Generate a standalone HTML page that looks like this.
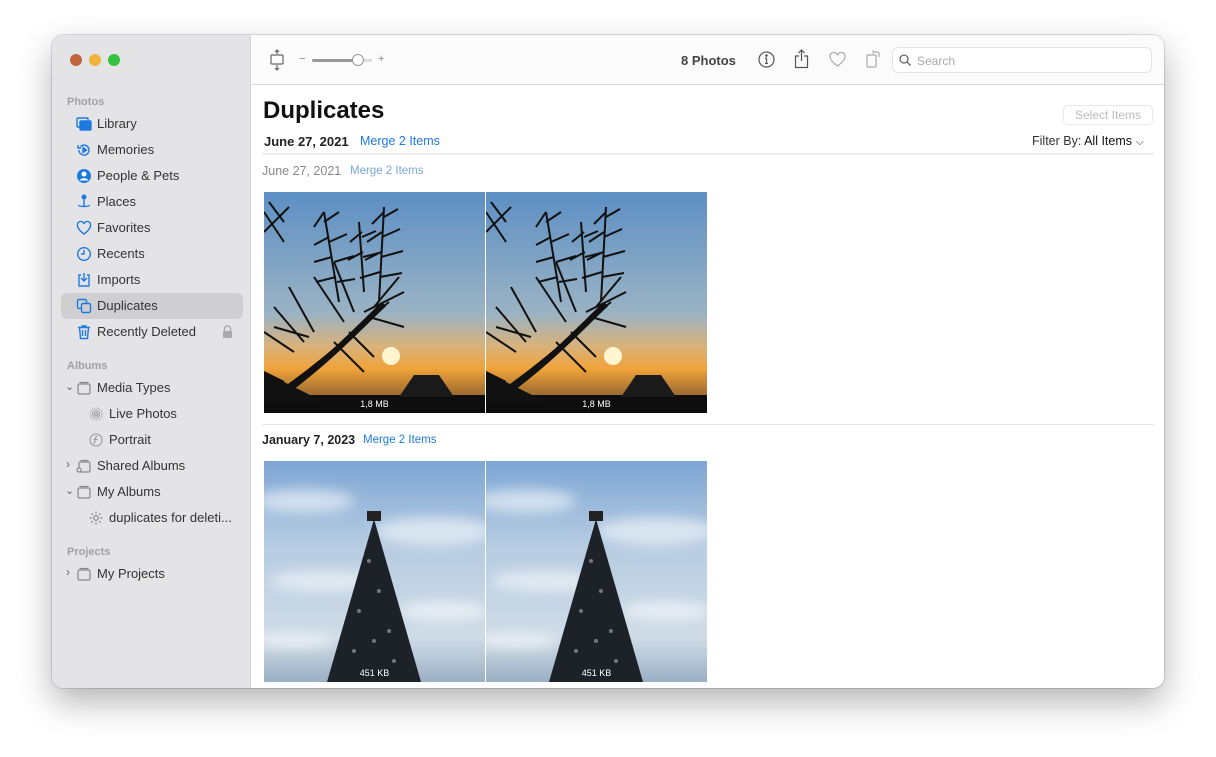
<!DOCTYPE html>
<html><head><meta charset="utf-8"><style>
*{margin:0;padding:0;box-sizing:border-box}
body{width:1216px;height:757px;background:#fff;font-family:"Liberation Sans",sans-serif;position:relative;overflow:hidden}
.win{position:absolute;left:52px;top:35px;width:1112px;height:653px;border-radius:11px;overflow:hidden;background:#fff;box-shadow:0 14px 34px rgba(0,0,0,.3),0 0 0 1px rgba(0,0,0,.12)}
.side{position:absolute;left:0;top:0;width:199px;height:100%;background:#e4e4e6;border-right:1px solid #d2d2d4}
.dot{position:absolute;top:19px;width:12px;height:12px;border-radius:50%}
.sec{position:absolute;left:15px;font-size:11px;font-weight:bold;color:#a2a2a6}
.it{position:absolute;left:45px;font-size:13px;color:#333;line-height:16px}
.ic{position:absolute;left:24px;width:16px;height:16px}
.sel{position:absolute;left:9px;top:258px;width:182px;height:26px;background:#cfcfd2;border-radius:6px}
.main{position:absolute;left:200px;top:0;right:0;bottom:0}
.tb{position:absolute;left:0;right:0;top:0;height:50px;border-bottom:1px solid #dcdcdc;background:#fbfbfb}
.blue{color:#1f7ae0}
.ph{position:absolute;width:221px;height:221px}
.cap{position:absolute;bottom:4px;width:100%;text-align:center;color:#fff;font-size:9px}
</style></head><body>
<div class="win">
<div class="side">
<div class="dot" style="left:18px;background:#c1653f"></div>
<div class="dot" style="left:37px;background:#f2b33a"></div>
<div class="dot" style="left:56px;background:#37c140"></div>
<div class="sec" style="top:61px">Photos</div>
<div class="sel"></div>
<svg class="ic" style="top:81px" viewBox="0 0 16 16" fill="none" stroke="#1f7ae0" stroke-width="1.4"><rect x="1" y="2" width="11" height="9" rx="1"/><rect x="4" y="5" width="11" height="9" rx="1" fill="#1f7ae0"/></svg><div class="it" style="top:81px">Library</div>
<svg class="ic" style="top:107px" viewBox="0 0 16 16" fill="none" stroke="#1f7ae0" stroke-width="1.4"><path d="M3 8a5 5 0 1 0 1.5-3.5M2 3v3h3"/><path d="M7 5.5v5l3.5-2.5z" fill="#1f7ae0"/></svg><div class="it" style="top:107px">Memories</div>
<svg class="ic" style="top:133px" viewBox="0 0 16 16"><circle cx="8" cy="8" r="7" fill="#1f7ae0"/><circle cx="8" cy="6" r="2.5" fill="#fff"/><path d="M3.5 12.5c1.5-3 7.5-3 9 0" fill="#fff"/></svg><div class="it" style="top:133px">People &amp; Pets</div>
<svg class="ic" style="top:159px" viewBox="0 0 16 16" fill="none" stroke="#1f7ae0" stroke-width="1.4"><circle cx="8" cy="3" r="1.8" fill="#1f7ae0"/><path d="M8 5v7M3 11c-2 2 12 2 10 0"/></svg><div class="it" style="top:159px">Places</div>
<svg class="ic" style="top:185px" viewBox="0 0 16 16" fill="none" stroke="#1f7ae0" stroke-width="1.4"><path d="M8 14S1.5 9.5 1.5 5.5A3.2 3.2 0 0 1 8 4a3.2 3.2 0 0 1 6.5 1.5C14.5 9.5 8 14 8 14z"/></svg><div class="it" style="top:185px">Favorites</div>
<svg class="ic" style="top:211px" viewBox="0 0 16 16" fill="none" stroke="#1f7ae0" stroke-width="1.4"><circle cx="8" cy="8" r="6.3"/><path d="M8 4v4H5"/></svg><div class="it" style="top:211px">Recents</div>
<svg class="ic" style="top:237px" viewBox="0 0 16 16" fill="none" stroke="#1f7ae0" stroke-width="1.4"><path d="M5 3H3v11h10V3h-2M8 1v8M5 6l3 3 3-3"/></svg><div class="it" style="top:237px">Imports</div>
<svg class="ic" style="top:263px" viewBox="0 0 16 16" fill="none" stroke="#1f7ae0" stroke-width="1.4"><rect x="1.5" y="1.5" width="9" height="9" rx="1.5"/><rect x="5.5" y="5.5" width="9" height="9" rx="1.5" fill="#cfcfd2"/></svg><div class="it" style="top:263px">Duplicates</div>
<svg class="ic" style="top:289px" viewBox="0 0 16 16" fill="none" stroke="#1f7ae0" stroke-width="1.4"><path d="M2 3.5h12M6 3.5V2h4v1.5M3.5 3.5l1 11h7l1-11M6.5 6v6M9.5 6v6"/></svg><div class="it" style="top:289px">Recently Deleted</div>
<svg style="position:absolute;left:170px;top:290px" width="11" height="13" viewBox="0 0 11 13"><path d="M2.5 6V4a3 3 0 0 1 6 0v2" fill="none" stroke="#aaa" stroke-width="1.4"/><rect x="1" y="6" width="9" height="7" rx="1" fill="#aaa"/></svg>
<div class="sec" style="top:325px">Albums</div>
<div style="position:absolute;left:13px;top:345px;font-size:11px;color:#666">⌄</div>
<svg class="ic" style="top:345px" viewBox="0 0 16 16" fill="none" stroke="#888" stroke-width="1.2"><rect x="2" y="4" width="12" height="10" rx="1.5"/><path d="M3.5 2.5h9"/></svg><div class="it" style="top:345px">Media Types</div>
<svg class="ic" style="left:36px;top:371px" viewBox="0 0 16 16" fill="none" stroke="#999" stroke-width="1.1"><circle cx="8" cy="8" r="6" stroke-dasharray="1 1"/><circle cx="8" cy="8" r="3.5"/><circle cx="8" cy="8" r="1.5"/></svg><div class="it" style="left:57px;top:371px">Live Photos</div>
<svg class="ic" style="left:36px;top:397px" viewBox="0 0 16 16" fill="none" stroke="#999" stroke-width="1.1"><circle cx="8" cy="8" r="6"/><path d="M9.5 4.5C7.5 4 7 6 7 8s-.5 3.5-2 3.5M5.5 7.5h4"/></svg><div class="it" style="left:57px;top:397px">Portrait</div>
<div style="position:absolute;left:14px;top:422px;font-size:12px;color:#666">›</div>
<svg class="ic" style="top:423px" viewBox="0 0 16 16" fill="none" stroke="#888" stroke-width="1.2"><rect x="3" y="4" width="11" height="10" rx="1.5"/><path d="M4.5 2.5h8"/><circle cx="3" cy="12" r="2" fill="#e4e4e6"/></svg><div class="it" style="top:423px">Shared Albums</div>
<div style="position:absolute;left:13px;top:449px;font-size:11px;color:#666">⌄</div>
<svg class="ic" style="top:449px" viewBox="0 0 16 16" fill="none" stroke="#888" stroke-width="1.2"><rect x="2" y="4" width="12" height="10" rx="1.5"/><path d="M3.5 2.5h9"/></svg><div class="it" style="top:449px">My Albums</div>
<svg class="ic" style="left:36px;top:475px" viewBox="0 0 16 16" fill="none" stroke="#888" stroke-width="1.2"><circle cx="8" cy="8" r="2.3"/><path d="M8 1.5v2M8 12.5v2M1.5 8h2M12.5 8h2M3.4 3.4l1.4 1.4M11.2 11.2l1.4 1.4M3.4 12.6l1.4-1.4M11.2 4.8l1.4-1.4"/></svg><div class="it" style="left:57px;top:475px">duplicates for deleti...</div>
<div class="sec" style="top:511px">Projects</div>
<div style="position:absolute;left:14px;top:530px;font-size:12px;color:#666">›</div>
<svg class="ic" style="top:531px" viewBox="0 0 16 16" fill="none" stroke="#888" stroke-width="1.2"><rect x="2" y="4" width="12" height="10" rx="1.5"/><path d="M3.5 2.5h9"/></svg><div class="it" style="top:531px">My Projects</div>
</div>
<div class="main">
<div class="tb">
<svg style="position:absolute;left:16px;top:14px" width="18" height="22" viewBox="0 0 18 22" fill="none" stroke="#666" stroke-width="1.2"><rect x="3" y="6" width="12" height="9" rx="1"/><path d="M9 1v4M9 16v5M7 3l2-2 2 2M7 19l2 2 2-2"/></svg>
<div style="position:absolute;left:47px;top:18px;font-size:11px;color:#888">−</div>
<div style="position:absolute;left:60px;top:24px;width:48px;height:3px;background:#999;border-radius:2px"></div>
<div style="position:absolute;left:108px;top:24px;width:12px;height:3px;background:#ddd"></div>
<div style="position:absolute;left:100px;top:19px;width:12px;height:12px;border-radius:50%;background:#fff;border:1px solid #999"></div>
<div style="position:absolute;left:126px;top:18px;font-size:11px;color:#888">+</div>
<div style="position:absolute;left:429px;top:18px;font-size:13px;font-weight:bold;color:#444">8 Photos</div>
<svg style="position:absolute;left:506px;top:16px" width="17" height="17" viewBox="0 0 17 17" fill="none" stroke="#555" stroke-width="1.2"><circle cx="8.5" cy="8.5" r="7.5"/><path d="M8.5 7v5.5M7 12.5h3M7 7h1.5"/><circle cx="8.5" cy="4.5" r=".7" fill="#555"/></svg>
<svg style="position:absolute;left:542px;top:14px" width="15" height="20" viewBox="0 0 15 20" fill="none" stroke="#555" stroke-width="1.2"><path d="M5 7H1.5v11.5h12V7H10M7.5 1v11M4.5 4l3-3 3 3"/></svg>
<svg style="position:absolute;left:577px;top:17px" width="17" height="15" viewBox="0 0 17 15" fill="none" stroke="#aaa" stroke-width="1.2"><path d="M8.5 14S1 9 1 4.8A3.6 3.6 0 0 1 8.5 3.5 3.6 3.6 0 0 1 16 4.8C16 9 8.5 14 8.5 14z"/></svg>
<svg style="position:absolute;left:613px;top:14px" width="16" height="20" viewBox="0 0 16 20" fill="none" stroke="#aaa" stroke-width="1.2"><rect x="2" y="6" width="9" height="12" rx="1"/><path d="M9 3h3a2 2 0 0 1 2 2v3M7.5 1.5 9 3 7.5 4.5"/></svg>
<div style="position:absolute;left:640px;top:12px;width:260px;height:26px;border:1px solid #e2e2e2;border-radius:6px;background:#fff"></div>
<svg style="position:absolute;left:647px;top:19px" width="12" height="12" viewBox="0 0 12 12" fill="none" stroke="#666" stroke-width="1.3"><circle cx="5" cy="5" r="4"/><path d="M8 8l3.5 3.5"/></svg>
<div style="position:absolute;left:665px;top:19px;font-size:12px;color:#aaa">Search</div>
</div>
<div style="position:absolute;left:11px;top:62px;font-size:24px;font-weight:bold;color:#111">Duplicates</div>
<div style="position:absolute;left:811px;top:70px;width:90px;height:20px;border:1px solid #e8e8e8;border-radius:5px;font-size:12px;color:#bbb;text-align:center;line-height:18px">Select Items</div>
<div style="position:absolute;left:12px;top:99px;font-size:13px;font-weight:bold;color:#222">June 27, 2021</div>
<div class="blue" style="position:absolute;left:108px;top:99px;font-size:12.5px">Merge 2 Items</div>
<div style="position:absolute;left:780px;top:99px;font-size:12.5px;color:#333">Filter By: <b style="font-weight:normal;color:#111">All Items</b> <span style="font-size:11px">⌵</span></div>
<div style="position:absolute;left:10px;right:10px;top:118px;height:2px;background:#ececec"></div>
<div style="position:absolute;left:10px;top:129px;font-size:12.5px;color:#888">June 27, 2021</div>
<div style="position:absolute;left:98px;top:130px;font-size:11.5px;color:#7aa6dc">Merge 2 Items</div>
<div style="position:absolute;left:10px;right:10px;top:389px;height:1px;background:#e5e5e5"></div>
<div style="position:absolute;left:10px;top:398px;font-size:12.5px;font-weight:bold;color:#222">January 7, 2023</div>
<div class="blue" style="position:absolute;left:111px;top:399px;font-size:11.5px">Merge 2 Items</div>

<svg width="0" height="0" style="position:absolute">
<defs>
<filter id="bl"><feGaussianBlur stdDeviation="6"/></filter>
<linearGradient id="sky1" x1="0" y1="0" x2="0" y2="1"><stop offset="0" stop-color="#5d8fc4"/><stop offset=".55" stop-color="#9ab3c4"/><stop offset=".7" stop-color="#d9b27a"/><stop offset=".8" stop-color="#f0a33a"/><stop offset=".92" stop-color="#9a6a30"/></linearGradient>
<linearGradient id="sky2" x1="0" y1="0" x2="0" y2="1"><stop offset="0" stop-color="#7ea6d4"/><stop offset=".4" stop-color="#b8cde2"/><stop offset=".8" stop-color="#cfdbe6"/><stop offset="1" stop-color="#9bb0c4"/></linearGradient>
<symbol id="p1" viewBox="0 0 221 221">
<rect width="221" height="221" fill="url(#sky1)"/>
<circle cx="127" cy="164" r="9" fill="#fff6d0"/>
<g stroke="#111" stroke-width="2" fill="none">
<path d="M0 210 C60 170 100 130 125 110 M60 20 L75 110 M120 15 L115 110 M95 30 L100 100"/>
<path d="M60 20 l-10 15 M60 30 l15 -10 M65 45 l-15 8 M65 50 l18 -8 M68 65 l-18 5 M70 70 l20 -6 M72 85 l-20 5 M73 90 l18 -3 M120 20 l-12 12 M120 25 l14 -8 M118 40 l-15 10 M118 45 l18 -8 M117 60 l-16 8 M117 65 l22 -6 M116 80 l-20 6 M116 85 l22 -4 M98 40 l-12 10 M98 45 l14 -6 M99 60 l-15 8 M99 65 l16 -4 M40 150 l-30 -35 M45 145 l-35 -10 M50 140 l-25 -45 M30 160 l-30 -20 M80 130 l-30 -45 M90 120 l-20 -50 M100 120 l40 -20 M105 125 l35 10 M110 115 l25 -30 M70 150 l30 30 M85 140 l25 25 M20 190 l-20 -10 M0 20 l20 30 M0 40 l25 -25 M5 10 l15 20"/>
</g>
<g stroke="#111" stroke-width="6" fill="none"><path d="M0 215 C60 175 100 130 120 112"/></g>
<rect y="203" width="221" height="18" fill="#0d0d0d"/>
<path d="M135 205 L150 183 L175 183 L190 205 Z" fill="#1a1a1a"/>
<path d="M0 180 L0 210 L60 210 Z" fill="#111"/>
</symbol>
<symbol id="p2" viewBox="0 0 221 221">
<rect width="221" height="221" fill="url(#sky2)"/>
<g fill="#fff" opacity=".55" filter="url(#bl)"><ellipse cx="40" cy="40" rx="50" ry="12"/><ellipse cx="170" cy="70" rx="60" ry="14"/><ellipse cx="60" cy="120" rx="55" ry="10"/><ellipse cx="180" cy="150" rx="45" ry="10"/><ellipse cx="30" cy="180" rx="40" ry="8"/></g>
<path d="M110 58 L63 221 L157 221 Z" fill="#1d2228"/>
<rect x="103" y="50" width="14" height="10" fill="#222"/>
<g fill="#c8ccd0" opacity=".5"><circle cx="105" cy="100" r="2"/><circle cx="115" cy="130" r="2"/><circle cx="95" cy="150" r="2"/><circle cx="125" cy="170" r="2"/><circle cx="90" cy="190" r="2"/><circle cx="130" cy="200" r="2"/><circle cx="110" cy="180" r="2"/></g>
</symbol>
</defs></svg>

<div class="ph" style="left:12px;top:157px"><svg width="221" height="221"><use href="#p1"/></svg><div class="cap">1,8 MB</div></div>
<div class="ph" style="left:234px;top:157px"><svg width="221" height="221"><use href="#p1"/></svg><div class="cap">1,8 MB</div></div>
<div class="ph" style="left:12px;top:426px"><svg width="221" height="221"><use href="#p2"/></svg><div class="cap">451 KB</div></div>
<div class="ph" style="left:234px;top:426px"><svg width="221" height="221"><use href="#p2"/></svg><div class="cap">451 KB</div></div>
</div>
</div>
</body></html>
